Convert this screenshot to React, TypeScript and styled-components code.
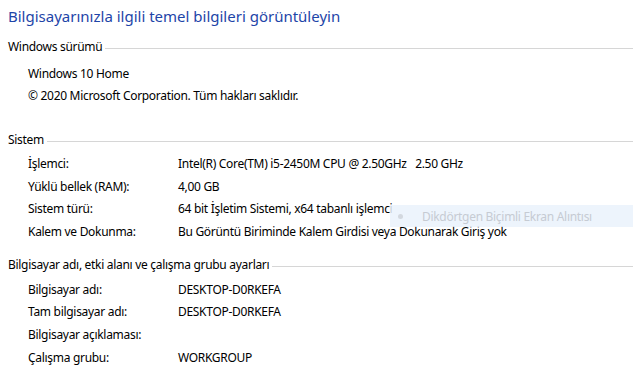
import styled, { createGlobalStyle } from 'styled-components';

const GlobalStyle = createGlobalStyle`
  html, body {
    margin: 0;
    padding: 0;
    background: #ffffff;
  }
  body {
    font-family: "Noto Sans", "Open Sans", "Liberation Sans", sans-serif;
    color: #000000;
  }
`;

type Row = { label: string; value?: string };

const sections: { title: string; top: number; gap: number; rows: Row[]; plain?: boolean }[] = [
  {
    title: 'Windows sürümü',
    top: 10,
    gap: 5,
    plain: true,
    rows: [{ label: 'Windows 10 Home' }, { label: '© 2020 Microsoft Corporation. Tüm hakları saklıdır.' }],
  },
  {
    title: 'Sistem',
    top: 23,
    gap: 2,
    rows: [
      { label: 'İşlemci:', value: 'Intel(R) Core(TM) i5-2450M CPU @ 2.50GHz   2.50 GHz' },
      { label: 'Yüklü bellek (RAM):', value: '4,00 GB' },
      { label: 'Sistem türü:', value: '64 bit İşletim Sistemi, x64 tabanlı işlemci' },
      { label: 'Kalem ve Dokunma:', value: 'Bu Görüntü Biriminde Kalem Girdisi veya Dokunarak Giriş yok' },
    ],
  },
  {
    title: 'Bilgisayar adı, etki alanı ve çalışma grubu ayarları',
    top: 12,
    gap: 3,
    rows: [
      { label: 'Bilgisayar adı:', value: 'DESKTOP-D0RKEFA' },
      { label: 'Tam bilgisayar adı:', value: 'DESKTOP-D0RKEFA' },
      { label: 'Bilgisayar açıklaması:', value: '' },
      { label: 'Çalışma grubu:', value: 'WORKGROUP' },
    ],
  },
];

function App() {
  return (
    <>
      <GlobalStyle />
      <Page>
        <Title>Bilgisayarınızla ilgili temel bilgileri görüntüleyin</Title>
        {sections.map((s) => (
          <Section key={s.title} $top={s.top}>
            <Legend>
              <LegendText>{s.title}</LegendText>
              <Rule />
            </Legend>
            <Rows $gap={s.gap}>
              {s.rows.map((r) => (
                <InfoRow key={r.label}>
                  <Label $wide={s.plain}>{r.label}</Label>
                  {!s.plain && <Value>{r.value}</Value>}
                </InfoRow>
              ))}
            </Rows>
          </Section>
        ))}
        <Snip>
          <Dot />
          Dikdörtgen Biçimli Ekran Alıntısı
        </Snip>
      </Page>
    </>
  );
}

export default App;

const Page = styled.div`
  position: relative;
  width: 633px;
  height: 374px;
  overflow: hidden;
  padding: 5px 0 0 8px;
  box-sizing: border-box;
  font-size: 12px;
  letter-spacing: -0.3px;
`;

const Title = styled.h1`
  margin: 0;
  height: 22px;
  font-size: 15px;
  font-weight: 400;
  line-height: 22px;
  letter-spacing: 0;
  color: #1e45a8;
`;

const Section = styled.section<{ $top: number }>`
  margin-top: ${({ $top }) => $top}px;
`;

const Legend = styled.div`
  display: flex;
  align-items: center;
  height: 20px;
`;

const LegendText = styled.span`
  white-space: nowrap;
  line-height: 20px;
`;

const Rule = styled.div`
  flex: 1;
  height: 1px;
  margin-left: 3px;
  margin-top: 3px;
  background: #d6d6d6;
`;

const Rows = styled.div<{ $gap: number }>`
  display: flex;
  flex-direction: column;
  padding-left: 20px;
  margin-top: ${({ $gap }) => $gap}px;
`;

const InfoRow = styled.div`
  display: flex;
  height: 22.67px;
  align-items: center;
  white-space: pre;
`;

const Label = styled.span<{ $wide?: boolean }>`
  width: ${({ $wide }) => ($wide ? 'auto' : '150px')};
  flex-shrink: 0;
`;

const Value = styled.span``;

const Snip = styled.div`
  position: absolute;
  left: 390px;
  top: 205px;
  right: 0;
  height: 22px;
  display: flex;
  align-items: center;
  padding-left: 8px;
  background: rgba(234, 242, 251, 0.85);
  color: #c6cbd3;
  font-size: 12px;
`;

const Dot = styled.span`
  width: 5px;
  height: 5px;
  border-radius: 50%;
  background: #d3d8df;
  margin-right: 19px;
`;
